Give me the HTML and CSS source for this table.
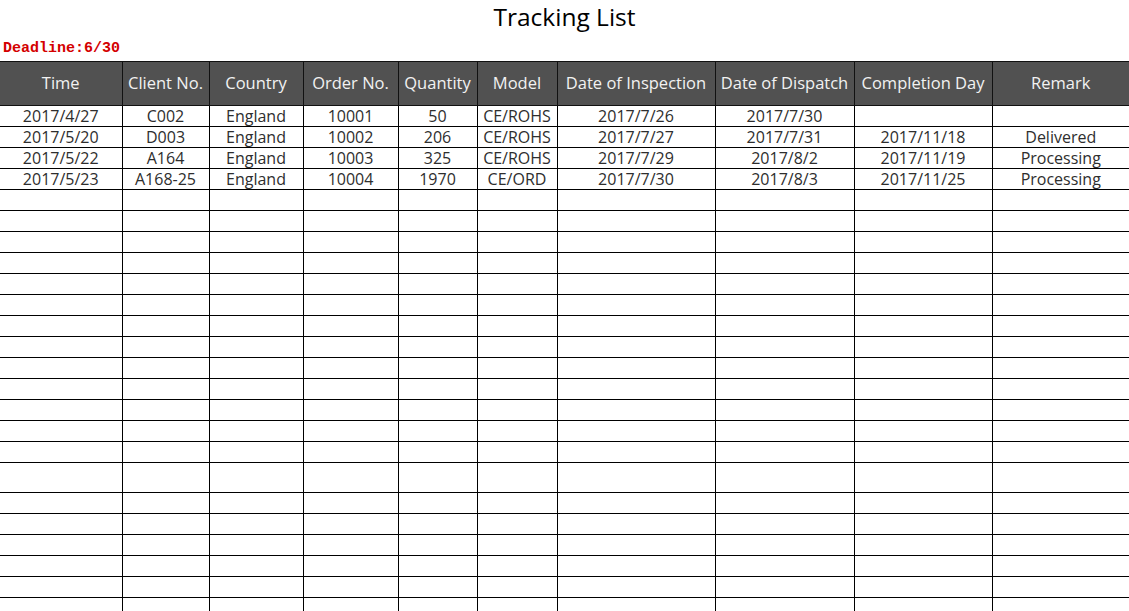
FILE: index.html
```html
<!DOCTYPE html>
<html>
<head>
<meta charset="utf-8">
<title>Tracking List</title>
<link rel="stylesheet" href="styles.css">
</head>
<body>
<div class="page">
  <h1 class="title">Tracking List</h1>
  <div class="deadline">Deadline:6/30</div>
  <table class="grid">
    <colgroup>
      <col class="c1"><col class="c2"><col class="c3"><col class="c4"><col class="c5">
      <col class="c6"><col class="c7"><col class="c8"><col class="c9"><col class="c10">
    </colgroup>
    <thead>
      <tr class="head">
        <th>Time</th><th>Client No.</th><th>Country</th><th>Order No.</th><th>Quantity</th>
        <th>Model</th><th>Date of Inspection</th><th>Date of Dispatch</th><th>Completion Day</th><th>Remark</th>
      </tr>
    </thead>
    <tbody>
      <tr class="row">
        <td>2017/4/27</td><td>C002</td><td>England</td><td>10001</td><td>50</td>
        <td>CE/ROHS</td><td>2017/7/26</td><td>2017/7/30</td><td></td><td class="soft-left"></td>
      </tr>
      <tr class="row">
        <td>2017/5/20</td><td>D003</td><td>England</td><td>10002</td><td>206</td>
        <td>CE/ROHS</td><td>2017/7/27</td><td>2017/7/31</td><td>2017/11/18</td><td>Delivered</td>
      </tr>
      <tr class="row">
        <td>2017/5/22</td><td>A164</td><td>England</td><td>10003</td><td>325</td>
        <td>CE/ROHS</td><td>2017/7/29</td><td>2017/8/2</td><td>2017/11/19</td><td>Processing</td>
      </tr>
      <tr class="row">
        <td>2017/5/23</td><td>A168-25</td><td>England</td><td>10004</td><td>1970</td>
        <td>CE/ORD</td><td>2017/7/30</td><td>2017/8/3</td><td>2017/11/25</td><td>Processing</td>
      </tr>
      <tr class="row"><td></td><td></td><td></td><td></td><td></td><td></td><td></td><td></td><td></td><td></td></tr>
      <tr class="row"><td></td><td></td><td></td><td></td><td></td><td></td><td></td><td></td><td></td><td></td></tr>
      <tr class="row"><td></td><td></td><td></td><td></td><td></td><td></td><td></td><td></td><td></td><td></td></tr>
      <tr class="row"><td></td><td></td><td></td><td></td><td></td><td></td><td></td><td></td><td></td><td></td></tr>
      <tr class="row"><td></td><td></td><td></td><td></td><td></td><td></td><td></td><td></td><td></td><td></td></tr>
      <tr class="row"><td></td><td></td><td></td><td></td><td></td><td></td><td></td><td></td><td></td><td></td></tr>
      <tr class="row"><td></td><td></td><td></td><td></td><td></td><td></td><td></td><td></td><td></td><td></td></tr>
      <tr class="row"><td></td><td></td><td></td><td></td><td></td><td></td><td></td><td></td><td></td><td></td></tr>
      <tr class="row"><td></td><td></td><td></td><td></td><td></td><td></td><td></td><td></td><td></td><td></td></tr>
      <tr class="row"><td></td><td></td><td></td><td></td><td></td><td></td><td></td><td></td><td></td><td></td></tr>
      <tr class="row"><td></td><td></td><td></td><td></td><td></td><td></td><td></td><td></td><td></td><td></td></tr>
      <tr class="row"><td></td><td></td><td></td><td></td><td></td><td></td><td></td><td></td><td></td><td></td></tr>
      <tr class="row"><td></td><td></td><td></td><td></td><td></td><td></td><td></td><td></td><td></td><td></td></tr>
      <tr class="row tall"><td></td><td></td><td></td><td></td><td></td><td></td><td></td><td></td><td></td><td></td></tr>
      <tr class="row"><td></td><td></td><td></td><td></td><td></td><td></td><td></td><td></td><td></td><td></td></tr>
      <tr class="row"><td></td><td></td><td></td><td></td><td></td><td></td><td></td><td></td><td></td><td></td></tr>
      <tr class="row"><td></td><td></td><td></td><td></td><td></td><td></td><td></td><td></td><td></td><td></td></tr>
      <tr class="row"><td></td><td></td><td></td><td></td><td></td><td></td><td></td><td></td><td></td><td></td></tr>
      <tr class="row"><td></td><td></td><td></td><td></td><td></td><td></td><td></td><td></td><td></td><td></td></tr>
      <tr class="row"><td></td><td></td><td></td><td></td><td></td><td></td><td></td><td></td><td></td><td></td></tr>
    </tbody>
  </table>
</div>
</body>
</html>
```

FILE: styles.css
```css
html, body {
  margin: 0;
  padding: 0;
  overflow: hidden;
  background: #ffffff;
}

.page {
  width: 1129px;
  height: 611px;
  overflow: hidden;
  font-family: "Open Sans", "Noto Sans", sans-serif;
}

.title {
  margin: 0;
  height: 34px;
  line-height: 34px;
  font-size: 24.5px;
  font-weight: normal;
  text-align: center;
  color: #000;
}

.deadline {
  margin-top: 5px;
  height: 20px;
  line-height: 20px;
  padding-left: 3px;
  font-family: "Liberation Mono", "DejaVu Sans Mono", monospace;
  font-weight: bold;
  font-size: 15px;
  color: #d40000;
}

.grid {
  margin-top: 2px;
  width: 1129px;
  border-collapse: collapse;
  table-layout: fixed;
}

.c1 { width: 122px; }
.c2 { width: 87px; }
.c3 { width: 94px; }
.c4 { width: 95px; }
.c5 { width: 79px; }
.c6 { width: 80px; }
.c7 { width: 158px; }
.c8 { width: 139px; }
.c9 { width: 138px; }
.c10 { width: 137px; }

.head th {
  height: 41px;
  padding: 0 0 2px;
  background: #515151;
  color: #f2f2f2;
  font-weight: normal;
  font-size: 16.5px;
  white-space: nowrap;
  border: 1px solid #111;
  text-align: center;
}

.row td {
  height: 20px;
  padding: 0;
  line-height: 20px;
  font-size: 16px;
  color: #2e2e2e;
  text-align: center;
  white-space: nowrap;
  border: 1px solid #000;
}

.row.tall td {
  height: 29px;
}

.grid th:first-child,
.grid td:first-child {
  border-left: none;
}

.grid th:last-child,
.grid td:last-child {
  border-right: none;
}

.row td.soft-left {
  border-left: 1px solid #c8c8c8;
  border-top-color: #000;
}
```
